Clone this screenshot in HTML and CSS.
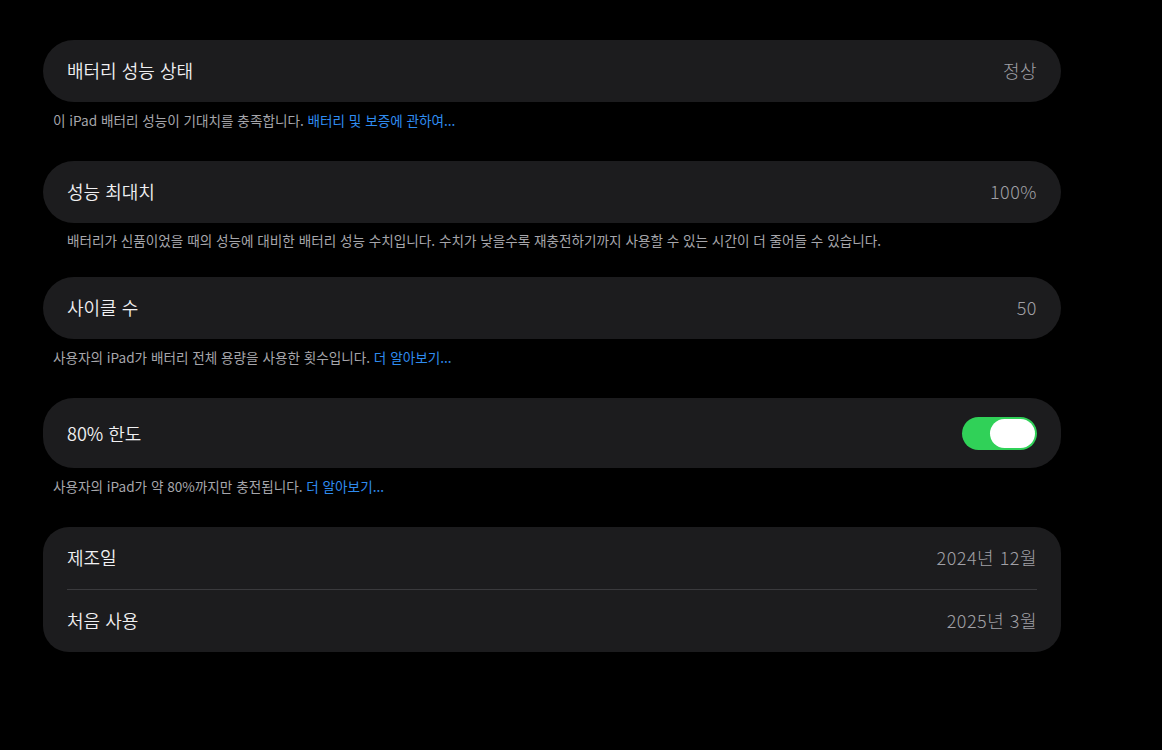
FILE: index.html
```html
<!DOCTYPE html>
<html lang="ko">
<head>
<meta charset="utf-8">
<title>배터리 성능 상태</title>
<link rel="stylesheet" href="styles.css">
</head>
<body>
<main class="page">
  <section class="card">
    <div class="row">
      <span class="label">배터리 성능 상태</span>
      <span class="value">정상</span>
    </div>
  </section>
  <p class="note note-a">이 iPad 배터리 성능이 기대치를 충족합니다. <a class="link" href="#">배터리 및 보증에 관하여...</a></p>

  <section class="card">
    <div class="row">
      <span class="label">성능 최대치</span>
      <span class="value">100%</span>
    </div>
  </section>
  <p class="note note-b indent">배터리가 신품이었을 때의 성능에 대비한 배터리 성능 수치입니다. 수치가 낮을수록 재충전하기까지 사용할 수 있는 시간이 더 줄어들 수 있습니다.</p>

  <section class="card">
    <div class="row">
      <span class="label">사이클 수</span>
      <span class="value">50</span>
    </div>
  </section>
  <p class="note note-a">사용자의 iPad가 배터리 전체 용량을 사용한 횟수입니다. <a class="link" href="#">더 알아보기...</a></p>

  <section class="card">
    <div class="row row-tall">
      <span class="label">80% 한도</span>
      <span class="toggle on"><span class="knob"></span></span>
    </div>
  </section>
  <p class="note note-a">사용자의 iPad가 약 80%까지만 충전됩니다. <a class="link" href="#">더 알아보기...</a></p>

  <section class="card card-group">
    <div class="row">
      <span class="label">제조일</span>
      <span class="value">2024년 12월</span>
    </div>
    <div class="divider"></div>
    <div class="row">
      <span class="label">처음 사용</span>
      <span class="value">2025년 3월</span>
    </div>
  </section>
</main>
</body>
</html>
```

FILE: styles.css
```css
* { box-sizing: border-box; }
html, body {
  margin: 0;
  padding: 0;
  background: #000;
}
body {
  font-family: "Noto Sans CJK KR", "Noto Sans", sans-serif;
  color: #f2f2f4;
  width: 1162px;
  height: 750px;
  overflow: hidden;
}
.page {
  padding: 40px 101px 0 43px;
  display: flex;
  flex-direction: column;
}
.card {
  background: #1c1c1e;
  border-radius: 31px;
}
.card-group {
  border-radius: 26px;
}
.row {
  height: 62px;
  display: flex;
  align-items: center;
  justify-content: space-between;
  padding: 0 24px 3px;
}
.row-tall {
  height: 70px;
  padding-bottom: 0;
}
.label {
  font-size: 18px;
  font-weight: 350;
  color: #f0f0f2;
}
.value {
  font-size: 18px;
  font-weight: 300;
  color: #a0a0a6;
  letter-spacing: 0.5px;
}
.divider {
  height: 1px;
  background: #3a3a3d;
  margin: 0 24px;
}
.note {
  margin: 0;
  font-size: 13.6px;
  line-height: 18px;
  color: #a6a6ab;
  padding-left: 10px;
}
.note.indent { padding-left: 24px; }
.note-a { padding-top: 9px; padding-bottom: 32px; }
.note-b { padding-top: 8px; padding-bottom: 28px; }
.link {
  color: #2f8cf0;
  text-decoration: none;
}
.toggle {
  width: 75px;
  height: 33px;
  border-radius: 17px;
  background: #30d158;
  display: flex;
  align-items: center;
  justify-content: flex-end;
  padding: 0 2px;
}
.knob {
  width: 45px;
  height: 29px;
  border-radius: 15px;
  background: #fff;
}
```
